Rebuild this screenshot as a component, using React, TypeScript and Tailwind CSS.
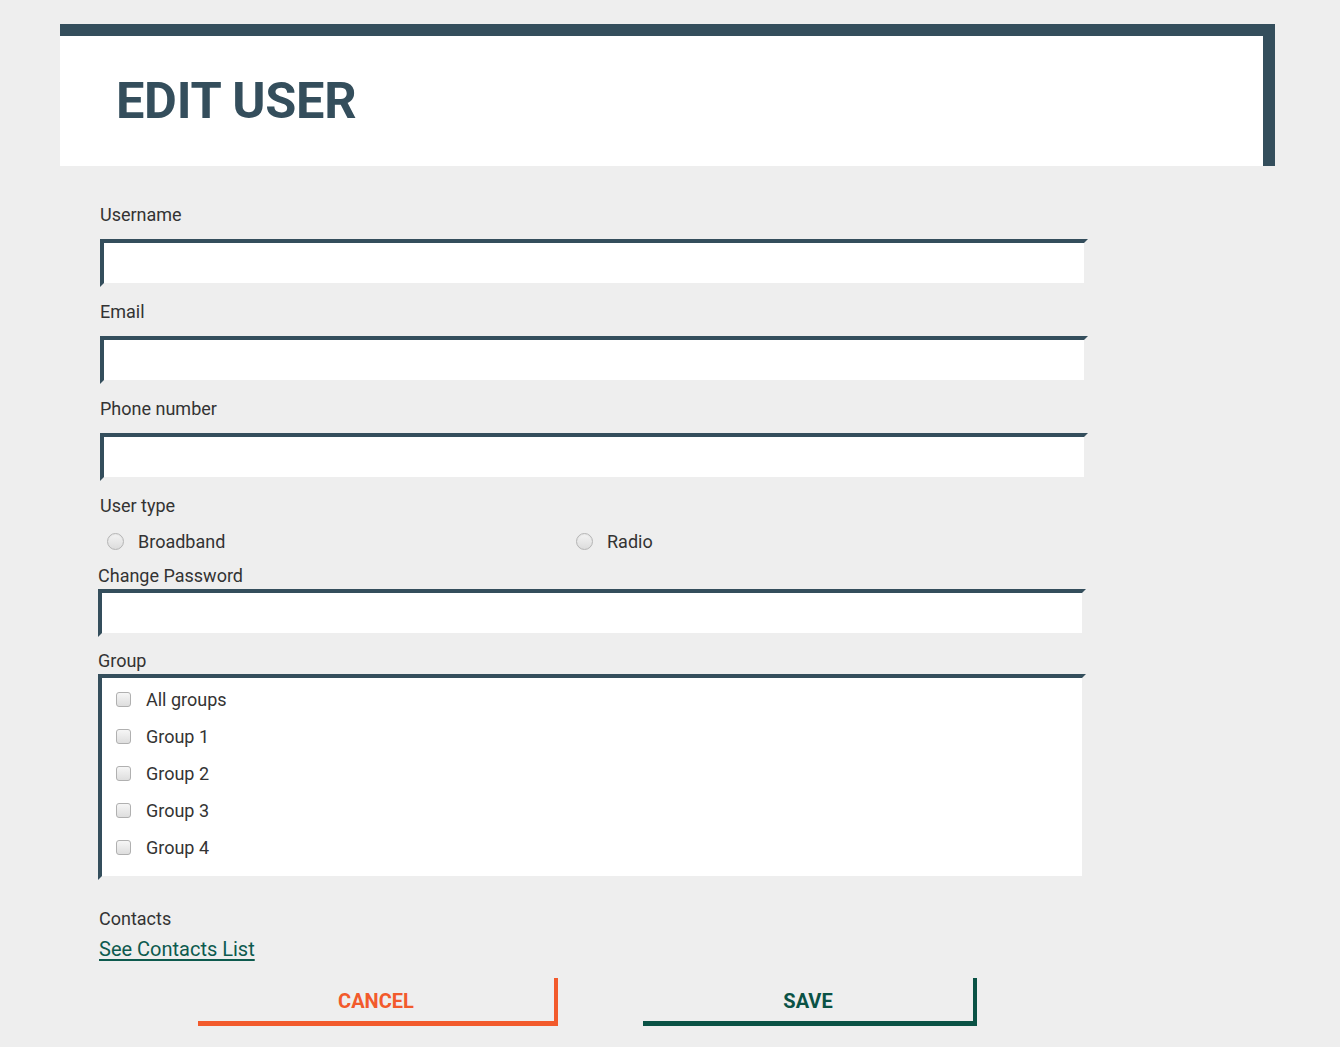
import React from "react";

function Field({ label, ml = "ml-[100px]", gap = "mt-[15px]", lead = "leading-[22px]" }: { label: string; ml?: string; gap?: string; lead?: string }) {
  return (
    <div className={ml}>
      <div className={`text-[18px] ${lead} text-[#333] h-[20px]`}>{label}</div>
      <div
        className={`w-[988px] h-[48px] ${gap} border-4 border-transparent border-t-[#344e5c] border-l-[#344e5c] bg-white bg-clip-padding`}
      />
    </div>
  );
}

function Radio({ label }: { label: string }) {
  return (
    <div className="flex items-center">
      <span className="w-[17px] h-[17px] rounded-full border border-[#b5b5b5] bg-gradient-to-b from-[#f4f4f4] to-[#dcdcdc] shadow-[inset_0_1px_1px_rgba(0,0,0,0.05)]" />
      <span className="ml-[14px] text-[18px] text-[#333]">{label}</span>
    </div>
  );
}

function Check({ label }: { label: string }) {
  return (
    <div className="flex items-center h-[37px]">
      <span className="w-[15px] h-[15px] rounded-[3px] border border-[#b0b0b0] bg-gradient-to-b from-[#f6f6f6] to-[#dedede]" />
      <span className="ml-[15px] text-[18px] text-[#333]">{label}</span>
    </div>
  );
}

export default function App() {
  return (
    <div
      className="min-h-[1047px] bg-[#eeeeee] pt-[24px]"
      style={{ fontFamily: "Roboto, 'Noto Sans', Arial, sans-serif" }}
    >
      <div className="ml-[60px] w-[1215px] h-[142px] bg-white border-t-[12px] border-r-[12px] border-[#344e5c] flex items-center">
        <h1 className="ml-[56px] text-[50.5px] font-bold text-[#344e5c] leading-none tracking-[-0.3px]">
          EDIT USER
        </h1>
      </div>

      <div className="mt-[38px]">
        <Field label="Username" />
        <div className="mt-[14px]">
          <Field label="Email" />
        </div>
        <div className="mt-[14px]">
          <Field label="Phone number" />
        </div>
        <div className="ml-[100px] mt-[14px]">
          <div className="text-[18px] leading-[22px] h-[20px] text-[#333]">User type</div>
          <div className="flex mt-[16px] h-[20px] items-center ml-[7px]">
            <div className="w-[469px]">
              <Radio label="Broadband" />
            </div>
            <Radio label="Radio" />
          </div>
        </div>
        <div className="mt-[15px]">
          <Field label="Change Password" ml="ml-[98px]" gap="mt-[3px]" lead="leading-[20px]" />
        </div>
        <div className="ml-[98px] mt-[14px]">
          <div className="text-[18px] leading-[20px] text-[#333]">Group</div>
          <div className="w-[988px] mt-[3px] border-4 border-transparent border-t-[#344e5c] border-l-[#344e5c] bg-white bg-clip-padding pl-[14px] pt-[3px] pb-[6px] h-[206px]">
            <Check label="All groups" />
            <Check label="Group 1" />
            <Check label="Group 2" />
            <Check label="Group 3" />
            <Check label="Group 4" />
          </div>
        </div>
        <div className="ml-[99px] mt-[29px]">
          <div className="text-[18px] leading-[20px] text-[#333]">Contacts</div>
          <a href="#" className="block mt-[9px] text-[20px] leading-[22px] text-[#0d5a4e] underline underline-offset-[3px]">
            See Contacts List
          </a>
        </div>
        <div className="flex mt-[18px]">
          <button className="ml-[198px] w-[360px] h-[48px] border-b-[5px] border-r-[4px] border-[#f25a2c] text-[#f25a2c] font-bold text-[20px] pt-[3px]">
            CANCEL
          </button>
          <button className="ml-[85px] w-[334px] h-[48px] border-b-[5px] border-r-[4px] border-[#0a5245] text-[#0a5245] font-bold text-[20px] pt-[3px]">
            SAVE
          </button>
        </div>
      </div>
    </div>
  );
}
